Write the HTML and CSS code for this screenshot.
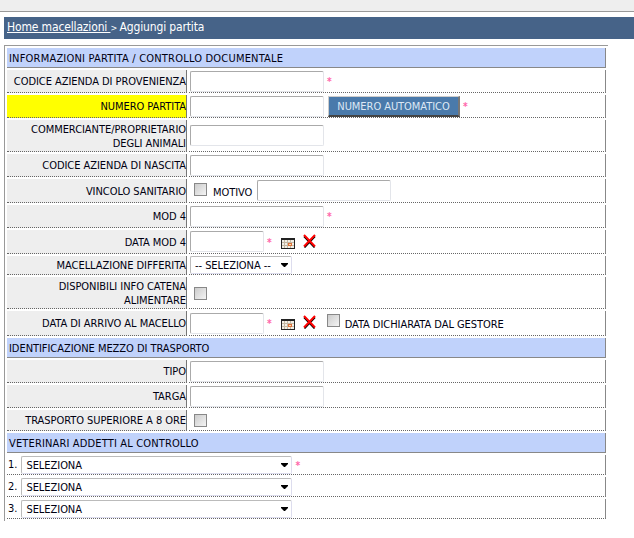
FILE: index.html
```html
<!DOCTYPE html>
<html lang="it">
<head>
<meta charset="utf-8">
<title>Aggiungi partita</title>
<link rel="stylesheet" href="styles.css">
</head>
<body>
<svg class="defs" width="0" height="0" aria-hidden="true">
  <symbol id="cal" viewBox="0 0 14 11">
    <rect x="0" y="0" width="14" height="11" fill="#f2efe6"/>
    <path d="M0 .5H14M0 1.5H14M.5 0V11M13.5 0V11M0 10.5H14" stroke="#222" fill="none"/>
    <path d="M3.5 2V10M6.5 2V10M9.5 2V10M1 4.5H13M1 7.5H13" stroke="#c4b8a4" fill="none"/>
    <rect x="7" y="5" width="4" height="3" fill="#e0703a"/>
    <rect x="8" y="6" width="2" height="1" fill="#f6e3b0"/>
  </symbol>
  <symbol id="del" viewBox="0 0 13 14">
    <path d="M1 2.5L11.5 13.5M12 2.5L1.5 13.5" stroke="#000" stroke-width="1.6" fill="none"/>
    <path d="M1 1L12 12.5M12 1L1 12.5" stroke="#f00" stroke-width="2" fill="none"/>
  </symbol>
</svg>
<div class="topbar"></div>
<div class="crumb"><a href="#">Home macellazioni </a><span class="sep"> &gt; </span>Aggiungi partita</div>
<table class="form">
  <colgroup><col class="c1"><col></colgroup>
  <tr class="sec"><th class="s1" colspan="2">INFORMAZIONI PARTITA / CONTROLLO DOCUMENTALE</th></tr>
  <tr class="r23"><td class="lab">CODICE AZIENDA DI PROVENIENZA</td><td class="val"><input class="txt" type="text"><span class="req">*</span></td></tr>
  <tr class="r23"><td class="lab hl">NUMERO PARTITA</td><td class="val"><input class="txt" type="text"><button class="auto" type="button">NUMERO AUTOMATICO</button><span class="req">*</span></td></tr>
  <tr class="r32"><td class="lab">COMMERCIANTE/PROPRIETARIO DEGLI ANIMALI</td><td class="val"><input class="txt" type="text"></td></tr>
  <tr class="r23"><td class="lab">CODICE AZIENDA DI NASCITA</td><td class="val"><input class="txt" type="text"></td></tr>
  <tr class="r24"><td class="lab">VINCOLO SANITARIO</td><td class="val"><input class="chk chk1" type="checkbox"><span class="inl">MOTIVO</span><input class="txt" type="text"></td></tr>
  <tr class="r23"><td class="lab">MOD 4</td><td class="val"><input class="txt" type="text"><span class="req">*</span></td></tr>
  <tr class="r24"><td class="lab">DATA MOD 4</td><td class="val"><input class="txt short" type="text"><span class="req">*</span><svg class="ic-cal"><use href="#cal"/></svg><svg class="ic-del"><use href="#del"/></svg></td></tr>
  <tr class="r19"><td class="lab">MACELLAZIONE DIFFERITA</td><td class="val"><select class="sel"><option>-- SELEZIONA --</option></select></td></tr>
  <tr class="r32"><td class="lab">DISPONIBILI INFO CATENA ALIMENTARE</td><td class="val"><input class="chk" type="checkbox"></td></tr>
  <tr class="r25"><td class="lab">DATA DI ARRIVO AL MACELLO</td><td class="val"><input class="txt short" type="text"><span class="req">*</span><svg class="ic-cal"><use href="#cal"/></svg><svg class="ic-del"><use href="#del"/></svg><input class="chk chk2" type="checkbox"><span class="inl">DATA DICHIARATA DAL GESTORE</span></td></tr>
  <tr class="sec"><th colspan="2">IDENTIFICAZIONE MEZZO DI TRASPORTO</th></tr>
  <tr class="r23"><td class="lab">TIPO</td><td class="val"><input class="txt" type="text"></td></tr>
  <tr class="r23"><td class="lab">TARGA</td><td class="val"><input class="txt" type="text"></td></tr>
  <tr class="r21"><td class="lab">TRASPORTO SUPERIORE A 8 ORE</td><td class="val"><input class="chk" type="checkbox"></td></tr>
  <tr class="sec"><th class="s3" colspan="2">VETERINARI ADDETTI AL CONTROLLO</th></tr>
  <tr class="r20"><td class="vet" colspan="2">1. <select class="sel wide"><option>SELEZIONA</option></select><span class="req">*</span></td></tr>
  <tr class="r20"><td class="vet" colspan="2">2. <select class="sel wide"><option>SELEZIONA</option></select></td></tr>
  <tr class="r20"><td class="vet" colspan="2">3. <select class="sel wide"><option>SELEZIONA</option></select></td></tr>
</table>
</body>
</html>
```
FILE: styles.css
```css
html, body { margin: 0; padding: 0; background: #fff; }
body { font-family: "DejaVu Sans Condensed", "DejaVu Sans", sans-serif; font-size: 11px; letter-spacing: -0.05px; color: #001; height: 538px; overflow: hidden; }
.defs { display: block; height: 0; }
.topbar { height: 11px; background: #eee; border-bottom: 1px solid #999; }
.crumb { margin: 5px 0 6px 4px; height: 22px; line-height: 20px; padding-left: 3px; background: #466388; color: #fff; font-size: 12px; letter-spacing: -0.15px; }
.crumb a { color: #fff; }
.sep { font-size: 9px; }
.form { margin-left: 4px; width: 604px; table-layout: fixed; border-collapse: separate; border-spacing: 2px; border-top: 1px solid #999; border-left: 1px solid #999; }
.c1 { width: 180px; }
.form td, .form th { padding: 0; box-sizing: border-box; }
.sec th { height: 20px; background: #c0d2fb; border-bottom: 1px solid #888; border-right: 1px solid #888; text-align: left; padding: 2px 0 0 2px; font-weight: normal; font-size: 11px; }
.sec .s1 { letter-spacing: 0.2px; }
.form .sec .s3 { letter-spacing: 0.15px; padding-top: 1px; }
.form .lab { background: #eee; border-right: 1px solid #777; border-bottom: 1px dotted #666; text-align: right; line-height: 14px; padding-top: 2px; }
.lab.hl { background: #ff0; }
.val, .vet { background: #fff; border-right: 1px solid #888; border-bottom: 1px dotted #666; white-space: nowrap; }
.r20 td { height: 20px; }
.r21 td { height: 21px; }
.r23 td { height: 23px; }
.r24 td { height: 24px; }
.r25 td { height: 25px; }
.r32 td { height: 32px; }
.form .r19 td { height: 19px; }
input, select, button { font-family: inherit; font-size: inherit; letter-spacing: inherit; margin: 0; box-sizing: border-box; vertical-align: middle; color: #001; }
.txt { width: 134px; height: 21px; margin-left: 1px; padding: 0 2px; background: #fff; border: 1px solid; border-color: #aaa #e3e5ea #e3e5ea #aaa; border-radius: 2px; outline: none; }
.txt.short { width: 74px; }
.req { color: #f6a; font-size: 10px; font-weight: bold; margin-left: 3px; vertical-align: -1px; }
.auto { width: 132px; height: 21px; margin-left: 4px; padding: 2px 0 0; background: #4a7aab; color: #dde8f5; border: 1px solid; border-width: 1px 2px 2px 1px; border-color: #ccc #777 #444 #ccc; }
.chk { appearance: none; width: 13px; height: 13px; margin: 1px 0 0 5px; border: 1px solid #888; background: linear-gradient(135deg, #ccc, #f4f4f4); }
.chk1 { margin-top: 0; vertical-align: -2px; }
.inl { margin: 0 4px 0 6px; vertical-align: -2px; }
.ic-cal { width: 14px; height: 11px; margin-left: 9px; vertical-align: -4px; }
.ic-del { width: 13px; height: 14px; margin-left: 8px; vertical-align: -3px; }
.chk2 { margin: 0 0 0 11px; vertical-align: -1px; }
.chk2 + .inl { margin-left: 5px; }
.sel { appearance: none; width: 102px; height: 18px; margin-left: 1px; padding: 0 0 0 4px; border: 1px solid; border-color: #bbb #dde #dde #bbb; border-radius: 2px; background: #fff url("data:image/svg+xml,%3Csvg xmlns='http://www.w3.org/2000/svg' width='7' height='4'%3E%3Cpath d='M0 0H7V1L4 4H3L0 1Z'/%3E%3C/svg%3E") no-repeat right 3px center; }
.sel.wide { width: 271px; margin-left: 1px; }
.form .vet { padding: 1px 0 0 1px; }
```
